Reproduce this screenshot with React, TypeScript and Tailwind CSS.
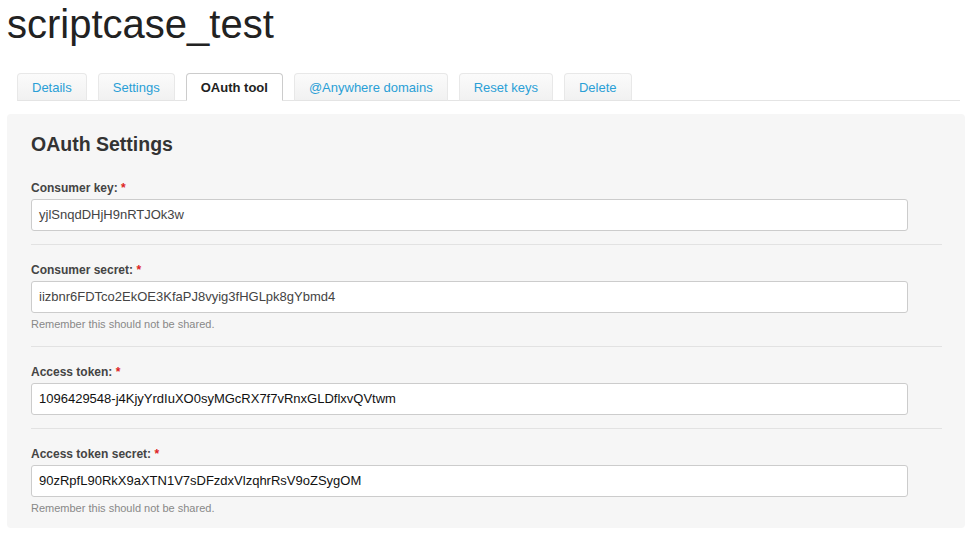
import React from "react";

const tabs = [
  { label: "Details" },
  { label: "Settings" },
  { label: "OAuth tool", active: true },
  { label: "@Anywhere domains" },
  { label: "Reset keys" },
  { label: "Delete" },
];

type Field = {
  label: string;
  value: string;
  help?: string;
  dark?: boolean;
  first?: boolean;
  last?: boolean;
};

const fields: Field[] = [
  { label: "Consumer key:", value: "yjlSnqdDHjH9nRTJOk3w", first: true },
  {
    label: "Consumer secret:",
    value: "iizbnr6FDTco2EkOE3KfaPJ8vyig3fHGLpk8gYbmd4",
    help: "Remember this should not be shared.",
  },
  {
    label: "Access token:",
    value: "1096429548-j4KjyYrdIuXO0syMGcRX7f7vRnxGLDflxvQVtwm",
    dark: true,
  },
  {
    label: "Access token secret:",
    value: "90zRpfL90RkX9aXTN1V7sDFzdxVlzqhrRsV9oZSygOM",
    help: "Remember this should not be shared.",
    dark: true,
    last: true,
  },
];

function FieldRow({ field }: { field: Field }) {
  return (
    <div
      className={`${field.first ? "" : "pt-[17px]"} ${
        field.last ? "pb-[13px]" : field.help ? "pb-[15px] border-b border-[#e2e2e2]" : "pb-[13px] border-b border-[#e2e2e2]"
      }`}
    >
      <label className="mb-[3px] block text-[12px] font-bold leading-4 text-[#444]">
        {field.label} <span className="text-[#dd2222]">*</span>
      </label>
      <div
        className={`flex h-8 w-[877px] items-center rounded-[3px] border border-[#cccccc] bg-white px-[7px] text-[13px] ${
          field.dark ? "text-[#111]" : "text-[#444]"
        }`}
      >
        {field.value}
      </div>
      {field.help && (
        <p className="mt-1 text-[11px] leading-[14px] text-[#888]">{field.help}</p>
      )}
    </div>
  );
}

export default function App() {
  return (
    <div
      className="min-h-screen bg-white px-[7px] pt-[2px]"
      style={{ fontFamily: '"Liberation Sans", Arial, sans-serif' }}
    >
      <h1 className="text-[40px] leading-[44px] text-[#222]">scriptcase_test</h1>

      <div className="mt-[27px] ml-[10px] mr-[6px] flex gap-[11px] border-b border-[#e4e4e4]">
        {tabs.map((tab) => (
          <div
            key={tab.label}
            className={`-mb-px flex h-[28px] items-center rounded-t-[4px] border px-[14px] pt-px text-[13px] ${
              tab.active
                ? "border-[#cccccc] border-b-white bg-white font-bold text-[#222]"
                : "border-[#e8e8e8] border-b-[#e4e4e4] bg-gradient-to-b from-[#fbfbfb] to-[#f1f1f1] text-[#2a9fd6]"
            }`}
          >
            {tab.label}
          </div>
        ))}
      </div>

      <div className="mt-[13px] mr-[1px] rounded-[4px] bg-[#f6f6f6] pl-6 pr-[23px] pt-[18px]">
        <h2 className="mb-6 text-[19.5px] font-bold leading-6 text-[#333]">OAuth Settings</h2>
        {fields.map((field) => (
          <FieldRow key={field.label} field={field} />
        ))}
      </div>
    </div>
  );
}
